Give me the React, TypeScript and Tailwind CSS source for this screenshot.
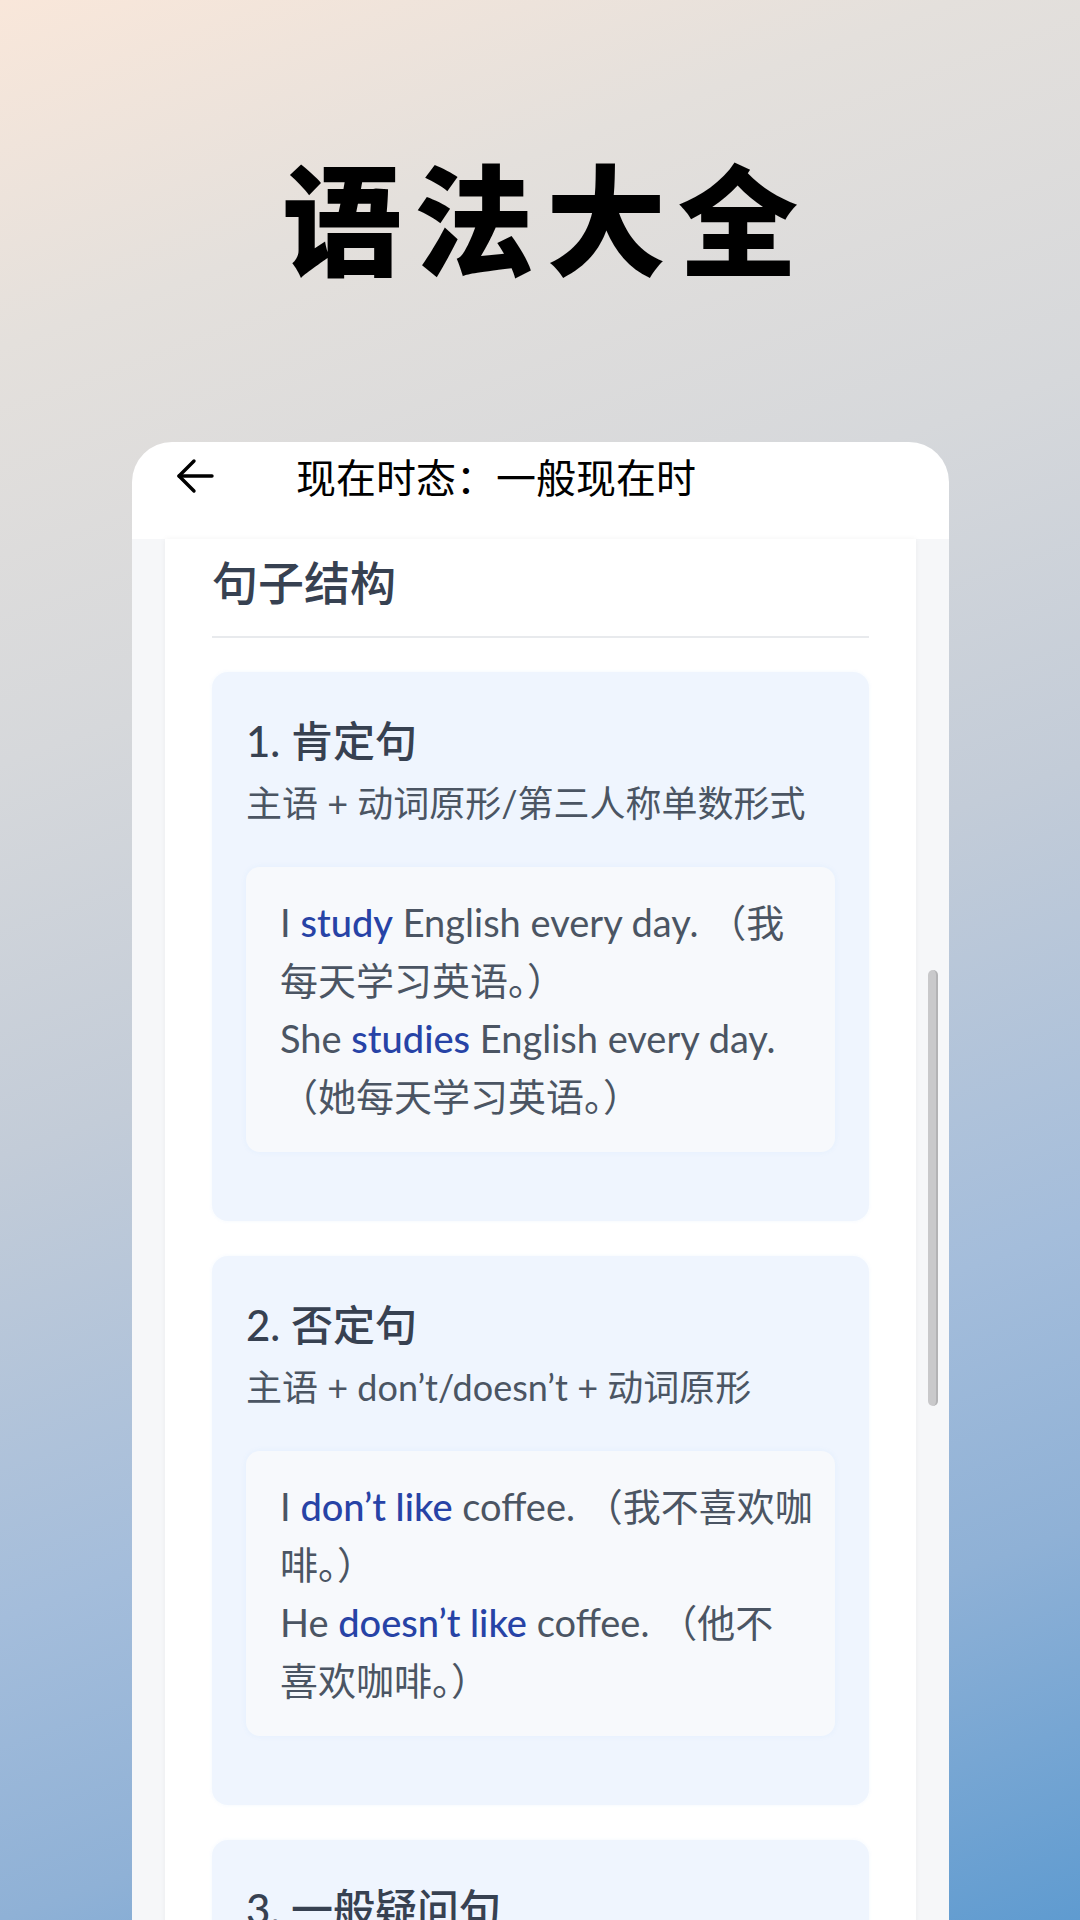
import React from 'react';

type Part = { t: string; hl?: boolean };

// line breaks follow the wrapped text in the screen
const sections: { title: string; rule: string; lines: Part[][] }[] = [
  {
    title: '1. 肯定句',
    rule: '主语 + 动词原形/第三人称单数形式',
    lines: [
      [{ t: 'I ' }, { t: 'study', hl: true }, { t: ' English every day. （我\n每天学习英语。）' }],
      [{ t: 'She ' }, { t: 'studies', hl: true }, { t: ' English every day.\n（她每天学习英语。）' }],
    ],
  },
  {
    title: '2. 否定句',
    rule: '主语 + don’t/doesn’t + 动词原形',
    lines: [
      [{ t: 'I ' }, { t: 'don’t like', hl: true }, { t: ' coffee. （我不喜欢咖\n啡。）' }],
      [{ t: 'He ' }, { t: 'doesn’t like', hl: true }, { t: ' coffee. （他不\n喜欢咖啡。）' }],
    ],
  },
  {
    title: '3. 一般疑问句',
    rule: 'Do/Does + 主语 + 动词原形？',
    lines: [
      [{ t: 'Do ' }, { t: 'you like', hl: true }, { t: ' coffee? （你喜欢咖啡\n吗？）' }],
    ],
  },
];

const cjk = { fontFamily: '"Noto Sans CJK SC", "Noto Sans", sans-serif' };
const body = { fontFamily: 'Lato, "Noto Sans CJK SC", sans-serif' };

export default function App() {
  return (
    <div
      className="w-[1080px] h-[1920px] overflow-hidden bg-[linear-gradient(160deg,#f9e7da_0%,#e4e0dc_15%,#d6d8db_33%,#c3ccd8_50%,#a4bddb_70%,#8fb1d6_83%,#5f9bd0_100%)]"
      style={cjk}
    >
      {/* Title */}
      <div className="h-[442px] flex items-center justify-center pb-[12px]">
        <h1 className="text-[120px] leading-none font-black text-black tracking-[12px] pl-[12px]">语法大全</h1>
      </div>

      {/* Phone card */}
      <div className="ml-[132px] w-[817px] h-[1478px] bg-white rounded-t-[40px] overflow-hidden flex flex-col">
        <div className="h-[68px] flex items-center shrink-0">
          <svg width="38" height="36" viewBox="0 0 38 36" className="ml-[44px]" fill="none" stroke="#000" strokeWidth="3.4" strokeLinecap="round" strokeLinejoin="round">
            <path d="M3 18H36" />
            <path d="M18 3L3 18L18 33" />
          </svg>
          <span className="ml-[82px] text-[40px] leading-none text-black">现在时态：一般现在时</span>
        </div>
        <div className="h-[29px] shrink-0" />

        <div className="flex-1 flex bg-[#f6f7f9] pl-[33px]">
          <div className="w-[751px] bg-white shadow-[0_0_6px_rgba(0,0,0,0.05)] px-[47px] pt-[12px]" style={body}>
            <h2 className="text-[46px] leading-[64px] font-medium text-[#374151]">句子结构</h2>
            <div className="mt-[21px] h-[2px] bg-[#e8eaed]" />

            <div className="flex flex-col gap-[35px] mt-[34px]">
              {sections.map((s) => (
                <div key={s.title} className="bg-[#eff5fe] rounded-[16px] px-[34px] pt-[41px] pb-[69px] shadow-[0_0_4px_rgba(59,130,246,0.06)]">
                  <div className="text-[42px] leading-[56px] font-medium text-[#374151]">{s.title}</div>
                  <div className="mt-[8px] text-[36px] leading-[52px] text-[#4b5563]">{s.rule}</div>
                  <div className="mt-[38px] bg-[#f7f9fc] rounded-[14px] px-[34px] pt-[26px] pb-[27px] shadow-[0_0_6px_rgba(59,130,246,0.06)]">
                    {s.lines.map((line, i) => (
                      <p key={i} className="text-[38px] leading-[58px] text-[#4b5563] whitespace-pre">
                        {line.map((p, j) =>
                          p.hl ? (
                            <span key={j} className="text-[#2743a6] font-medium">{p.t}</span>
                          ) : (
                            <span key={j}>{p.t}</span>
                          )
                        )}
                      </p>
                    ))}
                  </div>
                </div>
              ))}
            </div>
          </div>

          <div className="w-[33px] flex justify-center">
            <div className="mt-[431px] ml-[1px] w-[10px] h-[436px] rounded-full bg-[#c9c9cb] border-r-2 border-[#b3b3b5]" />
          </div>
        </div>
      </div>
    </div>
  );
}
